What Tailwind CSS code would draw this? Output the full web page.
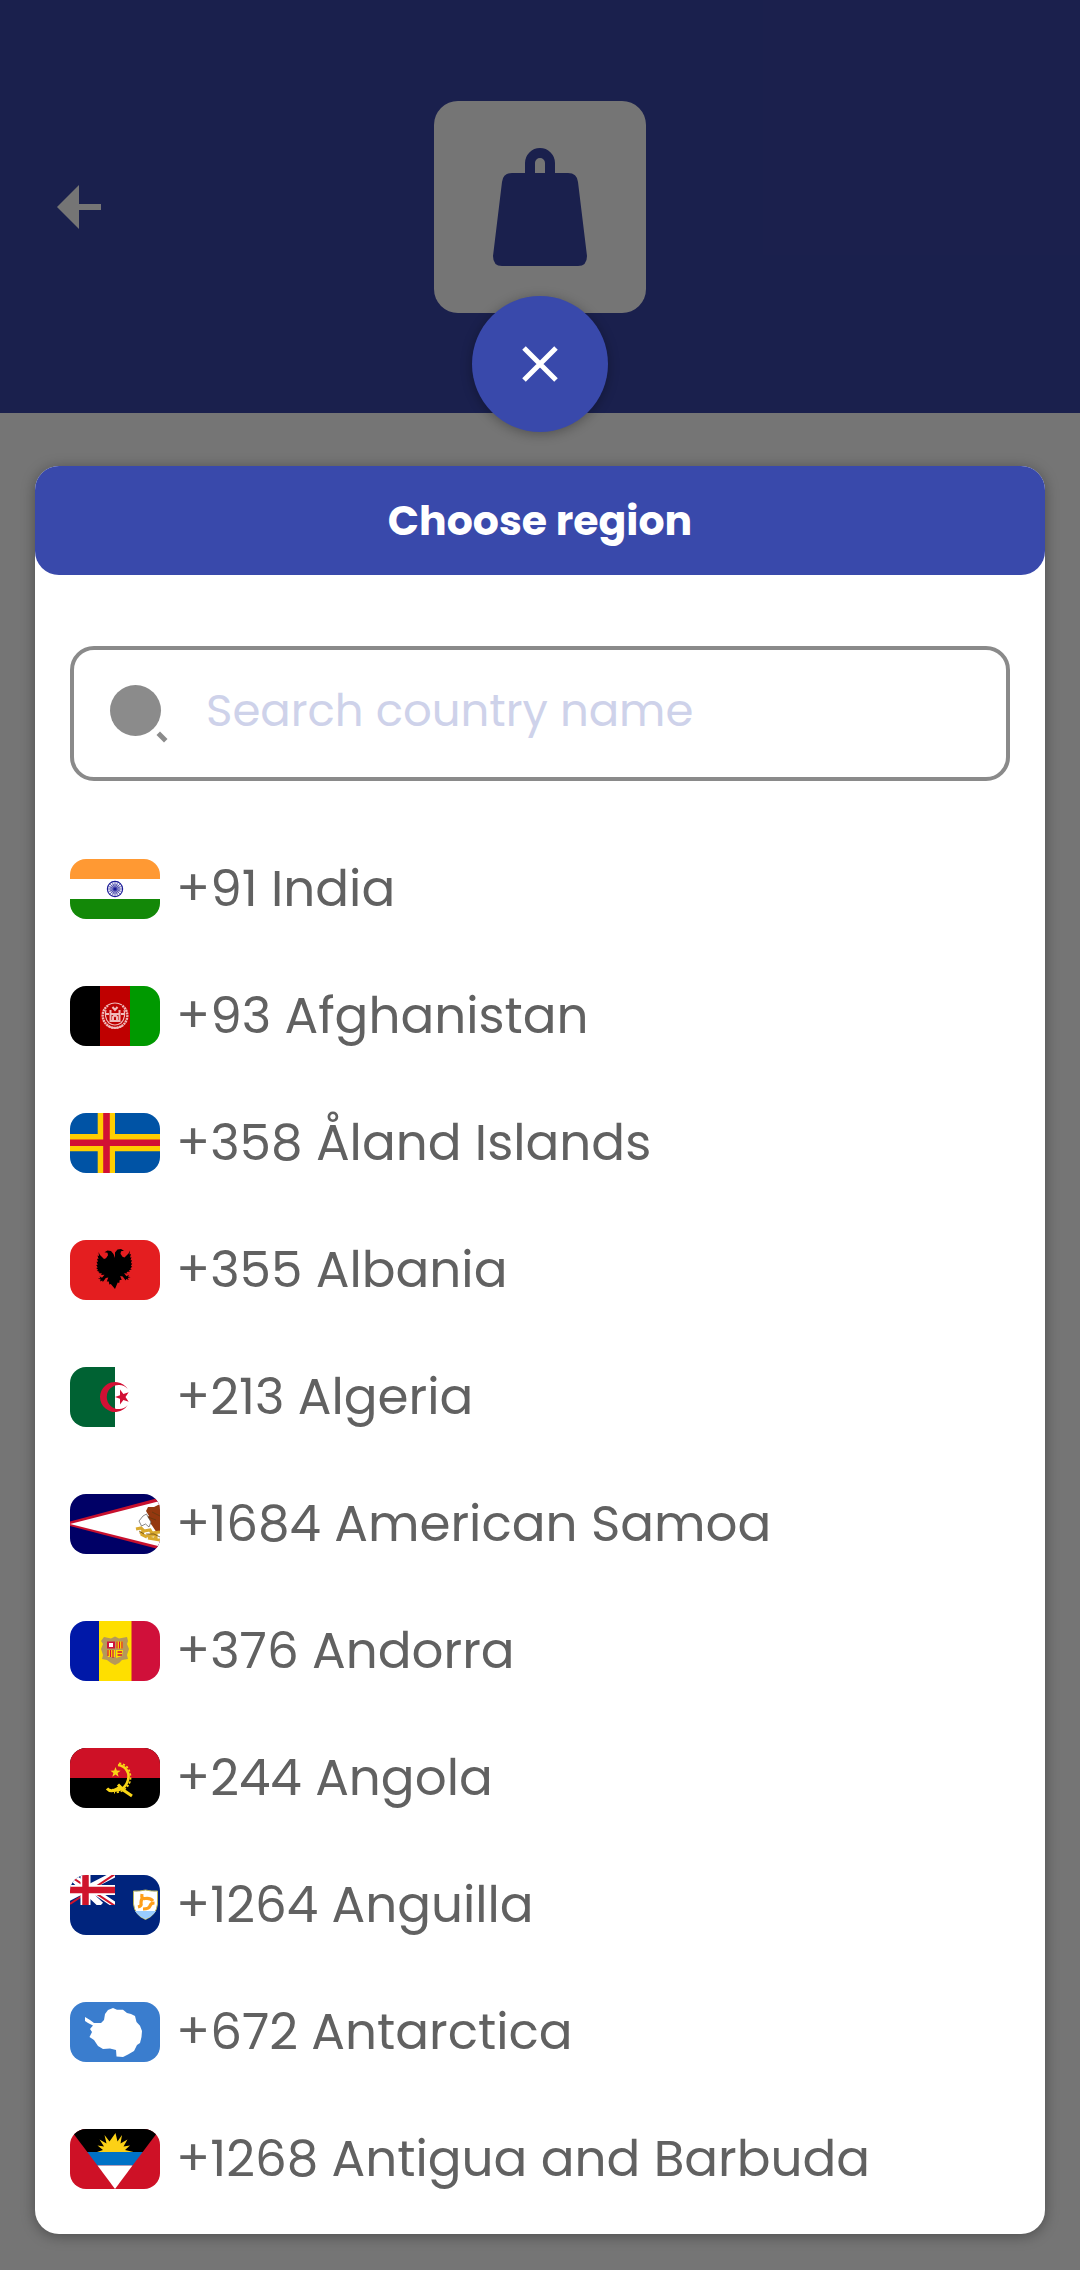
<!DOCTYPE html>
<html lang="en">
<head>
<meta charset="utf-8">
<meta name="viewport" content="width=device-width, initial-scale=1">
<title>Choose region</title>
<script src="https://cdn.jsdelivr.net/npm/@tailwindcss/browser@4"></script>
</head>
<body class="bg-white font-['Poppins','Inter',sans-serif]">
<div class="grid min-h-screen">

  <!-- Sign-in page behind the dialog -->
  <div class="col-start-1 row-start-1">
    <header class="grid h-[413px] grid-cols-[1fr_auto_1fr] items-center bg-[#3a46a8] px-14">
      <a href="#" aria-label="Back" class="justify-self-start">
        <svg class="h-11 w-12" viewBox="0 0 48 44" fill="#fff"><path d="M1 22 23 0v19h22v6H23V44z"/></svg>
      </a>
      <div class="flex size-[212px] items-center justify-center rounded-3xl bg-white">
        <svg class="h-[118px] w-24" viewBox="0 0 96 118" fill="#3a46a8">
          <path fill-rule="evenodd" d="M33 25V15a15 15 0 0 1 30 0v10h13q9 0 10 9l9 74q0 10-9 10H10q-9 0-9-10l9-74q1-9 10-9zM43 25h10V15a5 5 0 0 0-10 0z"/>
        </svg>
      </div>
    </header>
  </div>

  <!-- Region picker -->
  <div class="z-10 col-start-1 row-start-1 flex flex-col items-center gap-[34px] bg-black/54 px-[35px] pt-[296px] pb-[35px]">
    <button type="button" aria-label="Close" class="flex size-[136px] items-center justify-center rounded-full bg-[#3949ab] shadow-[0_2px_12px_rgba(0,0,0,0.3)]">
      <svg class="size-9" viewBox="0 0 36 36" stroke="#fff" stroke-width="5" fill="none"><path d="M2 2l32 32M34 2l-32 32"/></svg>
    </button>

    <section role="dialog" aria-labelledby="title" class="w-full rounded-3xl bg-white pb-3 shadow-[0_2px_14px_rgba(0,0,0,0.35)]">
      <h1 id="title" class="flex h-[109px] items-center justify-center rounded-3xl bg-[#3949ab] text-[41px] font-bold text-white">Choose region</h1>

      <div class="px-[35px] pt-[71px]">
        <label class="flex h-[135px] items-center gap-[38px] rounded-3xl border-4 border-[#8a8a8a] px-9">
          <svg class="size-[58px] shrink-0" viewBox="0 0 58 58" fill="#8b8b8b"><circle cx="25.500" cy="25.500" r="25.500"/><path d="M50 46.500l7.500 7.500-3.500 3.500-7.500-7.500z"/></svg>
          <input type="text" aria-label="Search country name" placeholder="Search country name" class="h-full w-full min-w-0 bg-transparent pb-1.5 text-[45px] text-[#616161] outline-none placeholder:text-[#ced2ea]">
        </label>

        <ul class="mt-11 text-[50px] text-[#616161]">
          <li><button type="button" class="flex h-[127px] w-full items-center gap-4 text-left">
            <svg class="h-[60px] w-[90px] shrink-0 rounded-2xl" viewBox="0 0 90 60">
              <path fill="#fff" d="M0 0h90v60H0z"/><path fill="#f93" d="M0 0h90v20H0z"/><path fill="#138808" d="M0 40h90v20H0z"/>
              <g stroke="#1a1a96" fill="none"><circle cx="45" cy="30" r="7.600" stroke-width="1.200"/><circle cx="45" cy="30" r="3.500" stroke-width="4" stroke-opacity=".3"/><path stroke-width=".6" d="M38 30h14M45 23v14M40 25l10 10M50 25L40 35M38.500 27.300l13 5.400M51.500 27.300l-13 5.400M42.300 23.500l5.400 13M47.700 23.500l-5.400 13"/></g><circle cx="45" cy="30" r="1.600" fill="#1a1a96"/>
            </svg><span>+91 India</span></button></li>
          <li><button type="button" class="flex h-[127px] w-full items-center gap-4 text-left">
            <svg class="h-[60px] w-[90px] shrink-0 rounded-2xl" viewBox="0 0 90 60">
              <path d="M0 0h30v60H0z"/><path fill="#bf0000" d="M30 0h30v60H30z"/><path fill="#090" d="M60 0h30v60H60z"/>
              <g fill="none" stroke="#f0b9b9"><path stroke-width="2.400" stroke-dasharray="2 .7" d="M38 19.500a12.300 12.300 0 1 0 14 0"/><path stroke-width="1.200" d="M38 19q7-4 14 0M36 24q-2 8 3 13 6 4 12 0 5-5 3-13"/><path stroke-width="2" d="M40.500 24v11h9V24M40 28h10M42.500 21l2.500 3 2.500-3M36 28h3M51 28h3M43 35v-4l2-2 2 2v4M38 40q7 4 14 0"/></g>
            </svg><span>+93 Afghanistan</span></button></li>
          <li><button type="button" class="flex h-[127px] w-full items-center gap-4 text-left">
            <svg class="h-[60px] w-[90px] shrink-0 rounded-2xl" viewBox="0 0 90 60">
              <path fill="#0053a5" d="M0 0h90v60H0z"/><path fill="#ffce00" d="M27.700 0H45v21h45v17.300H45V60H27.700V38.300H0V21h27.700z"/><path fill="#d21034" d="M33.200 0h6.600v26.500H90V33H39.800v27h-6.600V33H0v-6.500h33.200z"/>
            </svg><span>+358 Åland Islands</span></button></li>
          <li><button type="button" class="flex h-[127px] w-full items-center gap-4 text-left">
            <svg class="h-[60px] w-[90px] shrink-0 rounded-2xl" viewBox="0 0 90 60">
              <path fill="#e41e20" d="M0 0h90v60H0z"/>
              <path d="M45 18l-1.500-4-2.500-3-3.500-.5-3 1.800 3 .5.500 2.500-2 3-2 .7-4-4-1.500-3 .5 4-1.500-.5 1 3.500-1.500-.2 1 3-1.500 0 1.200 3-1.500.2 1.500 2.500-1.500.5 2 2-1.500.8 3 1.200-1.300 1 3.600.6-1 1.400 3.500-.3-2.500 3-2.500-1.500 1 2-2.700.3 3 1-1 2 2.500-1 .5 1.500 3-4 2.500-.5-1.500 4 2 0 .5 3 1.500-.5L45 49l2.700-6.500 1.500.5.500-3 2 0-1.500-4 2.500.5 3 4 .5-1.500 2.500 1-1-2 3-1-2.700-.3 1-2-2.500 1.500-2.500-3 3.500.3-1-1.400 3.600-.6-1.300-1 3-1.200-1.500-.8 2-2-1.500-.5 1.500-2.500-1.500-.2 1.200-3-1.500 0 1-3-1.500.2 1-3.500-1.500.5.500-4-1.500 3-4 4-2-.7-2-3 .5-2.500 3-.5-3-1.800-3.500.5-2.500 3z"/>
            </svg><span>+355 Albania</span></button></li>
          <li><button type="button" class="flex h-[127px] w-full items-center gap-4 text-left">
            <svg class="h-[60px] w-[90px] shrink-0 rounded-2xl" viewBox="0 0 90 60">
              <path fill="#fff" d="M0 0h90v60H0z"/><path fill="#006233" d="M0 0h45v60H0z"/>
              <path fill="#d21034" d="M57.700 22a15 15 0 1 0 0 16 12 12 0 1 1 0-16zM45 30l5-1.800V22.500l3.400 4.500 5.300-1.700-3.200 4.700 3.200 4.700-5.300-1.700-3.400 4.500v-5.700z"/>
            </svg><span>+213 Algeria</span></button></li>
          <li><button type="button" class="flex h-[127px] w-full items-center gap-4 text-left">
            <svg class="h-[60px] w-[90px] shrink-0 rounded-2xl" viewBox="0 0 90 60">
              <path fill="#006" d="M0 0h90v60H0z"/><path fill="#c8102e" d="M0 27.500L90 3.500v52L0 32z"/><path fill="#fff" d="M0 30L90 7v45.500z"/>
              <path fill="#94380f" d="M90 10l-6 3-6 0-2 4 3 5-3 1.500 6 8 4 6h4z"/>
              <path fill="#fff" stroke="#555" stroke-width=".7" d="M69 27l4-5 3.500-2 1.500 3 3 5-2 5-3.500-3-4 2z"/>
              <path fill="none" stroke="#d9a92e" stroke-width="3.200" d="M66 35l5-1 3 3-4 3M74 37l6-1 3 5-6 1M82 39l8-1M78 44l12 2M71 40l6 3M86 37v9"/><path fill="none" stroke="#5c3a10" stroke-width=".7" d="M69 37l5 3M76 40h8l6 3M78 23l8 3M82 18l8 4"/>
            </svg><span>+1684 American Samoa</span></button></li>
          <li><button type="button" class="flex h-[127px] w-full items-center gap-4 text-left">
            <svg class="h-[60px] w-[90px] shrink-0 rounded-2xl" viewBox="0 0 90 60">
              <path fill="#0018a8" d="M0 0h30v60H0z"/><path fill="#fedf00" d="M29 0h33v60H29z"/><path fill="#d0103a" d="M61.500 0H90v60H61.500z"/>
              <path fill="#b5985a" d="M34 16l7 1.500 4-2 4 2 8-1.500 1 4-1 3 2 5-2 6 1 4-6 1-3 3-4 2-4-2-4-3-5-1 1-4-2-6 2-5-2-3z"/>
              <path fill="#d0103a" d="M37 20.500h8v7h-8z"/><path fill="#fff" d="M39 22h4v4h-4z"/><path fill="#fedf00" d="M46 20.500h7v7h-7zM37 29h8v7h-7zM46 29h7l-1 6-6 2z"/>
              <path stroke="#d0103a" stroke-width="1.200" d="M47 20.500v7M49.500 20.500v7M52 20.500v7M38 29v6M40.500 29v7M43 29v8"/><path stroke="#d0103a" stroke-width="1.500" d="M47.500 31h4.500M47.500 34h4.500"/>
            </svg><span>+376 Andorra</span></button></li>
          <li><button type="button" class="flex h-[127px] w-full items-center gap-4 text-left">
            <svg class="h-[60px] w-[90px] shrink-0 rounded-2xl" viewBox="0 0 90 60">
              <path d="M0 0h90v60H0z"/><path fill="#ce1126" d="M0 0h90v30H0z"/>
              <g fill="none" stroke="#f9d616"><path stroke-width="2.600" d="M48 17c8 1 12 8 10 15-2 8-9 12-16 10"/><path stroke-width="1.800" stroke-dasharray="2.200 1.800" d="M49 15.500c9 0 13 10 11 18-3 8-9 11-16 11"/><path stroke-width="3" d="M37 40.500c3 3.500 7 3 13-1.500M48 36.500l6 6 8 5.500"/></g>
              <path fill="#f9d616" d="M45.500 19l1.300 3.600 3.800.1-3 2.300 1 3.700-3.100-2.200-3.200 2.200 1.100-3.700-3-2.300 3.800-.1z"/>
            </svg><span>+244 Angola</span></button></li>
          <li><button type="button" class="flex h-[127px] w-full items-center gap-4 text-left">
            <svg class="h-[60px] w-[90px] shrink-0 rounded-2xl" viewBox="0 0 90 60">
              <path fill="#00247d" d="M0 0h90v60H0z"/>
              <svg width="45" height="30" viewBox="0 0 45 30"><path stroke="#fff" stroke-width="6" d="M-1 0l32 30M-15 30L45-1M0 0l45 30"/><path stroke="#cf142b" stroke-width="2" d="M0 1l45 30M0 29L45-1"/><path stroke="#fff" stroke-width="10" d="M15.500 0v30M0 15h45"/><path stroke="#cf142b" stroke-width="6.500" d="M15.500 0v30M0 15h45"/></svg>
              <path fill="#fff" stroke="#b9b45a" stroke-width="1" d="M63.500 16q6 .5 12-1 6 1.500 12 1v13q-1 11-12 15.500-11-4.500-12-15.500z"/>
              <path fill="#9cf" d="M65 36h21q-3 5-10.500 8Q68 41 65 36z"/>
              <g fill="none" stroke="#ff9f1a" stroke-width="3.200"><path d="M72 19q-1 5 3 4.500 5-1 8 2.500"/><path d="M84.500 28q-4 0-4.500 3-1 3-7 3"/><path d="M68 32q4-1 3-4 0-4 2-5"/></g>
            </svg><span>+1264 Anguilla</span></button></li>
          <li><button type="button" class="flex h-[127px] w-full items-center gap-4 text-left">
            <svg class="h-[60px] w-[90px] shrink-0 rounded-2xl" viewBox="0 0 90 60">
              <path fill="#3a7dce" d="M0 0h90v60H0z"/>
              <path fill="#fff" d="M15 15l5 3 4 3h7l3-3 1-6 3-4 5-2 4 1.700h6l4 3.300 4 1 4 2 1.500 6 3.500 3.700 2 5.300-.5 6-1.500 6-3 2-3 6-6 3.500-5 2.500-6.500-.5-.5-6.500-6-1.500-7 .5-5-3-4-6-4.500-3 2.500-5-2-3 3-3.500-5-2.500-3-2z"/>
            </svg><span>+672 Antarctica</span></button></li>
          <li><button type="button" class="flex h-[127px] w-full items-center gap-4 text-left">
            <svg class="h-[60px] w-[90px] shrink-0 rounded-2xl" viewBox="0 0 90 60">
              <path fill="#ce1126" d="M0 0h90v60H0z"/><path d="M0 0h90L72.700 23H17.300z"/><path fill="#0072c6" d="M17.300 23h55.400L62.500 36.500h-35z"/><path fill="#fff" d="M27.500 36.500h35L45 60z"/>
              <path fill="#fcd116" d="M27 23l6-2-5.500-4.500 6.500 1-4.500-7 7 4-2-8.500 5 6.500L45.500 4l2 8.500 4.500-6.500-1.500 8.500 7-4-4 7 6.500-1L55 21l8.500 2z"/>
            </svg><span>+1268 Antigua and Barbuda</span></button></li>
        </ul>
      </div>
    </section>
  </div>
</div>
</body>
</html>
